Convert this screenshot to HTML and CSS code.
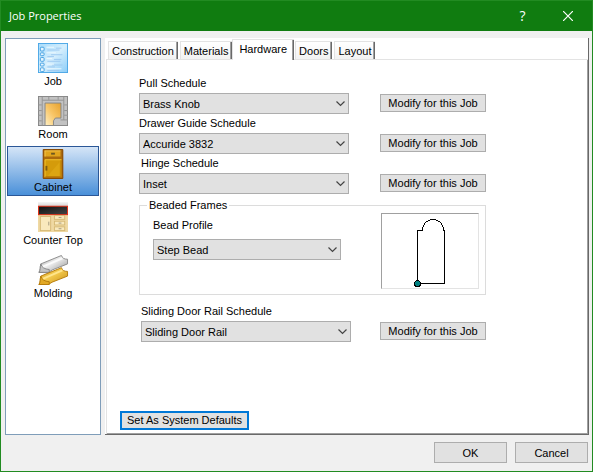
FILE: index.html
```html
<!DOCTYPE html>
<html lang="en">
<head>
<meta charset="utf-8">
<title>Job Properties</title>
<link rel="stylesheet" href="styles.css">
</head>
<body>
<div class="window">
  <header class="titlebar">
    <h1 class="title">Job Properties</h1>
    <button class="title-button" type="button" aria-label="Help">?</button>
    <button class="title-button" type="button" aria-label="Close">
      <svg width="10" height="10" viewBox="0 0 10 10"><path d="M0 0L10 10M10 0L0 10" stroke="#fff" stroke-width="1.2"/></svg>
    </button>
  </header>

  <div class="content">
    <nav class="sidebar" aria-label="Sections">
      <button class="section" type="button">
        <svg width="32" height="32" viewBox="0 0 32 32">
          <defs>
            <linearGradient id="sheet" x2="1" y2="1"><stop offset="0" stop-color="#a9dcfb"/><stop offset=".5" stop-color="#d4eefd"/><stop offset="1" stop-color="#8ccdf8"/></linearGradient>
          </defs>
          <rect x=".5" y=".5" width="31" height="31" fill="url(#sheet)" stroke="#4aa6e6"/>
          <g fill="#e8f6ff" stroke="#3f9ee0"><rect x="2.500" y="4.500" width="4" height="4" rx="1"/><rect x="2.500" y="10.500" width="4" height="3" rx="1"/><rect x="2.500" y="15.500" width="4" height="4" rx="1"/><rect x="2.500" y="21.500" width="4" height="3" rx="1"/><rect x="2.500" y="26.500" width="4" height="4" rx="1"/></g>
          <path d="M19 5.500h6M10 7.500h13M14 12.500h12M10 14.500h7M17 17.500h8M10 19.500h14M15 23.500h11M10 25.500h8M10 29.500h13" stroke="#9cc8f0"/>
          <path d="M9 4.500h8M9 10.500h10M9 16.500h6M9 22.500h8M9 27.500h16" stroke="#effaff"/>
        </svg>
        <span>Job</span>
      </button>
      <button class="section" type="button">
        <svg width="32" height="32" viewBox="0 0 32 32">
          <defs><linearGradient id="glow" x1="1" x2="0" y2="1"><stop offset="0" stop-color="#e6a12d"/><stop offset=".5" stop-color="#f8c566"/><stop offset="1" stop-color="#fff0c4"/></linearGradient></defs>
          <rect x=".5" y=".5" width="31" height="31" fill="#c2c2c2" stroke="#858585"/>
          <path d="M7.500 31.500V7.500h17v16h-6l-2 3v5z" fill="url(#glow)" stroke="#858585"/>
          <path d="M4.500 1v3.500h23V1M4.500 4.500v27M27.500 4.500v21M0 9.500h4M0 15.500h4M0 20.500h4M0 26.500h4M28 9.500h4M28 15.500h4M28 20.500h4M11.500 1v3M21.500 1v3M24 25.500h8" fill="none" stroke="#929292"/>
        </svg>
        <span>Room</span>
      </button>
      <button class="section selected" type="button" aria-current="true">
        <svg width="32" height="32" viewBox="0 0 32 32">
          <rect x="5" width="22" height="32" rx="1" fill="#864b08"/>
          <rect x="6" y="1" width="20" height="30" fill="#aa690c"/>
          <rect x="7" y="2" width="17" height="6" fill="#e0a41c"/><path d="M7 2h17M7.500 2v6" stroke="#f2c44d"/>
          <rect x="7" y="11" width="18" height="19" fill="#d49b0b"/>
          <path d="M7.500 30V11.500H25" fill="none" stroke="#f2c230"/>
          <path d="M10 29l13-15v15z" fill="#dca512"/>
          <path d="M24.500 12v17.500H8" fill="none" stroke="#b87908"/>
          <rect x="14" y="4" width="4" height="2" fill="#6c5722"/><path d="M8 18h2v5H8z" fill="#7c5a13"/>
        </svg>
        <span>Cabinet</span>
      </button>
      <button class="section" type="button">
        <svg width="32" height="32" viewBox="0 0 32 32">
          <defs>
            <linearGradient id="wall" x2="0" y2="1"><stop offset="0" stop-color="#f6f6f6"/><stop offset="1" stop-color="#d2d2d2"/></linearGradient>
            <linearGradient id="slab" x2="1" y2="1"><stop offset="0" stop-color="#111"/><stop offset="1" stop-color="#454545"/></linearGradient>
          </defs>
          <rect width="32" height="5" fill="url(#wall)"/>
          <rect y="13" width="32" height="19" fill="#efd9a3"/>
          <rect x=".5" y="4.500" width="31" height="9" fill="url(#slab)" stroke="#e32b10"/>
          <g fill="#f9e9bd" stroke="#d5b875"><rect x="2.500" y="15.500" width="11" height="15"/><rect x="17.500" y="14.500" width="11" height="4"/><rect x="17.500" y="20.500" width="11" height="4"/><rect x="17.500" y="26.500" width="11" height="4"/></g>
          <path d="M22 16.500h3M22 22.500h3M22 28.500h3M11.500 21v4" stroke="#a2977f"/>
        </svg>
        <span>Counter Top</span>
      </button>
      <button class="section" type="button">
        <svg width="32" height="32" viewBox="0 0 32 32">
          <defs>
            <linearGradient id="steel" x2="1" y2="1"><stop offset="0" stop-color="#9a9a9a"/><stop offset=".45" stop-color="#eee"/><stop offset="1" stop-color="#8c8c8c"/></linearGradient>
            <linearGradient id="brass" x2="1" y2="1"><stop offset="0" stop-color="#c8921a"/><stop offset=".45" stop-color="#f5cc50"/><stop offset="1" stop-color="#c78d13"/></linearGradient>
          </defs>
          <path d="M1 18.500C3 16 2 13 3 9.500L25 .5c1 3 3 4 6.500 4v5L15 16l-4 3z" fill="url(#steel)" stroke="#8b8b8b"/>
          <path d="M5 12.500L26 3.500" stroke="#fafafa" stroke-width="2"/>
          <path d="M1 18.500C3 16 2 13 3 9.500c1 4 4 5.500 9 6v3z" fill="#c4c4c4" stroke="#858585"/>
          <path d="M1 31.500C3 29 2 26 3 22.500L25 13.500c1 3 3 4 6.500 4v5L15 29l-4 2.500z" fill="url(#brass)" stroke="#b57b0c"/>
          <path d="M5 25.500L26 16.500" stroke="#ffe58c" stroke-width="2"/>
          <path d="M1 31.500C3 29 2 26 3 22.500c1 4 4 5.500 9 6v3z" fill="#e2a925" stroke="#b57b0c"/>
        </svg>
        <span>Molding</span>
      </button>
    </nav>

    <main class="pages">
      <div class="tabs" role="tablist">
        <button class="tab" type="button" role="tab">Construction</button>
        <button class="tab" type="button" role="tab">Materials</button>
        <button class="tab active" type="button" role="tab" aria-selected="true">Hardware</button>
        <button class="tab" type="button" role="tab">Doors</button>
        <button class="tab" type="button" role="tab">Layout</button>
      </div>
      <form class="panel" role="tabpanel">
        <div class="form">
          <div class="row">
            <div class="field">
              <label for="pull">Pull Schedule</label>
              <div class="combo"><select id="pull"><option>Brass Knob</option></select><svg class="chevron" width="9" height="6" viewBox="0 0 9 6"><path d="M.5 .5l4 4 4-4"/></svg></div>
            </div>
            <button class="button modify" type="button">Modify for this Job</button>
          </div>
          <div class="row">
            <div class="field">
              <label for="guide">Drawer Guide Schedule</label>
              <div class="combo"><select id="guide"><option>Accuride 3832</option></select><svg class="chevron" width="9" height="6" viewBox="0 0 9 6"><path d="M.5 .5l4 4 4-4"/></svg></div>
            </div>
            <button class="button modify" type="button">Modify for this Job</button>
          </div>
          <div class="row">
            <div class="field">
              <label class="inset" for="hinge">Hinge Schedule</label>
              <div class="combo"><select id="hinge"><option>Inset</option></select><svg class="chevron" width="9" height="6" viewBox="0 0 9 6"><path d="M.5 .5l4 4 4-4"/></svg></div>
            </div>
            <button class="button modify" type="button">Modify for this Job</button>
          </div>

          <fieldset class="group">
            <legend>Beaded Frames</legend>
            <div class="group-body">
              <div class="bead">
                <label for="bead">Bead Profile</label>
                <div class="combo"><select id="bead"><option>Step Bead</option></select><svg class="chevron" width="9" height="6" viewBox="0 0 9 6"><path d="M.5 .5l4 4 4-4"/></svg></div>
              </div>
              <div class="preview">
                <svg width="96" height="74" viewBox="0 0 96 74" shape-rendering="crispEdges">
                  <path d="M35.500 69.500V16.500h5v-2l1-3 2-3 3-2 3-1h3l3 1 3 2 2 3 1 3 .5 2V69.500z" fill="none" stroke="#000"/>
                  <circle cx="35.500" cy="69.500" r="3" fill="#008080" stroke="#000"/>
                </svg>
              </div>
            </div>
          </fieldset>

          <div class="row">
            <div class="field shifted">
              <label for="rail">Sliding Door Rail Schedule</label>
              <div class="combo"><select id="rail"><option>Sliding Door Rail</option></select><svg class="chevron" width="9" height="6" viewBox="0 0 9 6"><path d="M.5 .5l4 4 4-4"/></svg></div>
            </div>
            <button class="button modify" type="button">Modify for this Job</button>
          </div>
        </div>
        <button class="button defaults" type="button">Set As System Defaults</button>
      </form>
    </main>
  </div>

  <footer class="actions">
    <button class="button action" type="button">OK</button>
    <button class="button action" type="button">Cancel</button>
  </footer>
</div>
</body>
</html>
```
FILE: styles.css
```css
* { box-sizing: border-box; }

body {
  margin: 0;
  font: 11px/16px "Liberation Sans", Arial, sans-serif;
  color: #000;
}

button, select { font: inherit; color: inherit; }
button { padding: 0; white-space: nowrap; }
svg { display: block; }

.window {
  display: flex;
  flex-direction: column;
  min-height: 100vh;
  background: #f0f0f0;
  border: 1px solid #228b22;
}

.titlebar {
  display: flex;
  align-items: center;
  height: 30px;
  padding: 0 2px 0 8px;
  background: #107c10;
  color: #fff;
}

.title {
  flex: 1;
  margin: 0;
  font: 11px/16px "Open Sans", "Noto Sans", sans-serif;
}

.title-button {
  display: grid;
  place-items: center;
  width: 45px;
  height: 30px;
  border: 0;
  background: none;
  font: 14px/16px "Open Sans", sans-serif;
}

.content {
  flex: 1;
  display: flex;
  gap: 4px;
  padding: 7px 3px 0 4px;
}

.sidebar {
  display: flex;
  flex-direction: column;
  gap: 3px;
  width: 96px;
  padding: 1px;
  background: #fff;
  border: 1px solid #7f9db9;
}

.section {
  display: flex;
  flex-direction: column;
  align-items: center;
  height: 50px;
  padding-top: 2px;
  border: 1px solid transparent;
  background: none;
}

.section.selected {
  border-color: #2b5797;
  background: linear-gradient(#d5e5f7, #4a90d9);
}

.pages {
  flex: 1;
  display: flex;
  flex-direction: column;
  background: #fff;
  border: solid #696969;
  border-width: 0 1px 1px 0;
}

.tabs {
  display: flex;
  align-items: flex-end;
  gap: 2px;
  height: 21px;
  padding-left: 3px;
}

.tab {
  height: 18px;
  padding: 0 4px 0 3px;
  border: solid #e3e3e3;
  border-width: 1px 0 0 1px;
  background: linear-gradient(#fff, #f2f2f2);
  box-shadow: inset -1px 0 #696969, inset -2px 0 #a0a0a0;
}

.tab.active {
  height: 21px;
  margin: 0 -1px -1px -2px;
  padding: 0 7px 3px 6px;
  background: #fff;
  position: relative;
}

.panel {
  flex: 1;
  display: flex;
  flex-direction: column;
  justify-content: space-between;
  align-items: flex-start;
  margin-left: 1px;
  padding: 15px 14px 4px 13px;
  border: solid #e3e3e3;
  border-width: 1px 0 0 1px;
  box-shadow: inset -1px -1px #a0a0a0;
}

.form {
  display: grid;
  gap: 1px;
  margin-left: 19px;
}

.row {
  display: grid;
  grid-template-columns: 210px 106px;
  gap: 31px;
  align-items: end;
}

.field, .bead { display: grid; gap: 2px; }
.shifted { margin: 0 -2px 0 2px; }
.inset { padding-left: 2px; }

.combo { position: relative; }

select {
  display: block;
  appearance: none;
  width: 100%;
  height: 21px;
  padding: 0 20px 0 3px;
  border: 1px solid #adadad;
  border-radius: 0;
  background: #e1e1e1;
}

.chevron {
  position: absolute;
  top: 8px;
  right: 4px;
  fill: none;
  stroke: #444;
  stroke-width: 1.2;
  pointer-events: none;
}

.button {
  border: 1px solid #adadad;
  background: #e1e1e1;
}

.modify { height: 18px; margin-bottom: 2px; line-height: 16px; }

.group {
  min-width: 0;
  margin: 2px 0 7px;
  padding: 0 6px 5px 13px;
  border: 1px solid #dcdcdc;
}

.group legend { margin-left: -6px; padding: 0 2px; }

.group-body {
  display: flex;
  justify-content: space-between;
}

.bead {
  width: 188px;
  gap: 6px;
  align-content: start;
  padding-top: 4px;
}

.preview {
  border: 1px solid;
  border-color: #a0a0a0 #e3e3e3 #e3e3e3 #a0a0a0;
}

.defaults {
  width: 129px;
  height: 19px;
  border: 2px solid #0078d7;
  line-height: 15px;
}

.actions {
  display: flex;
  justify-content: flex-end;
  gap: 8px;
  padding: 7px 4px 8px;
}

.action { width: 73px; height: 21px; }
```
